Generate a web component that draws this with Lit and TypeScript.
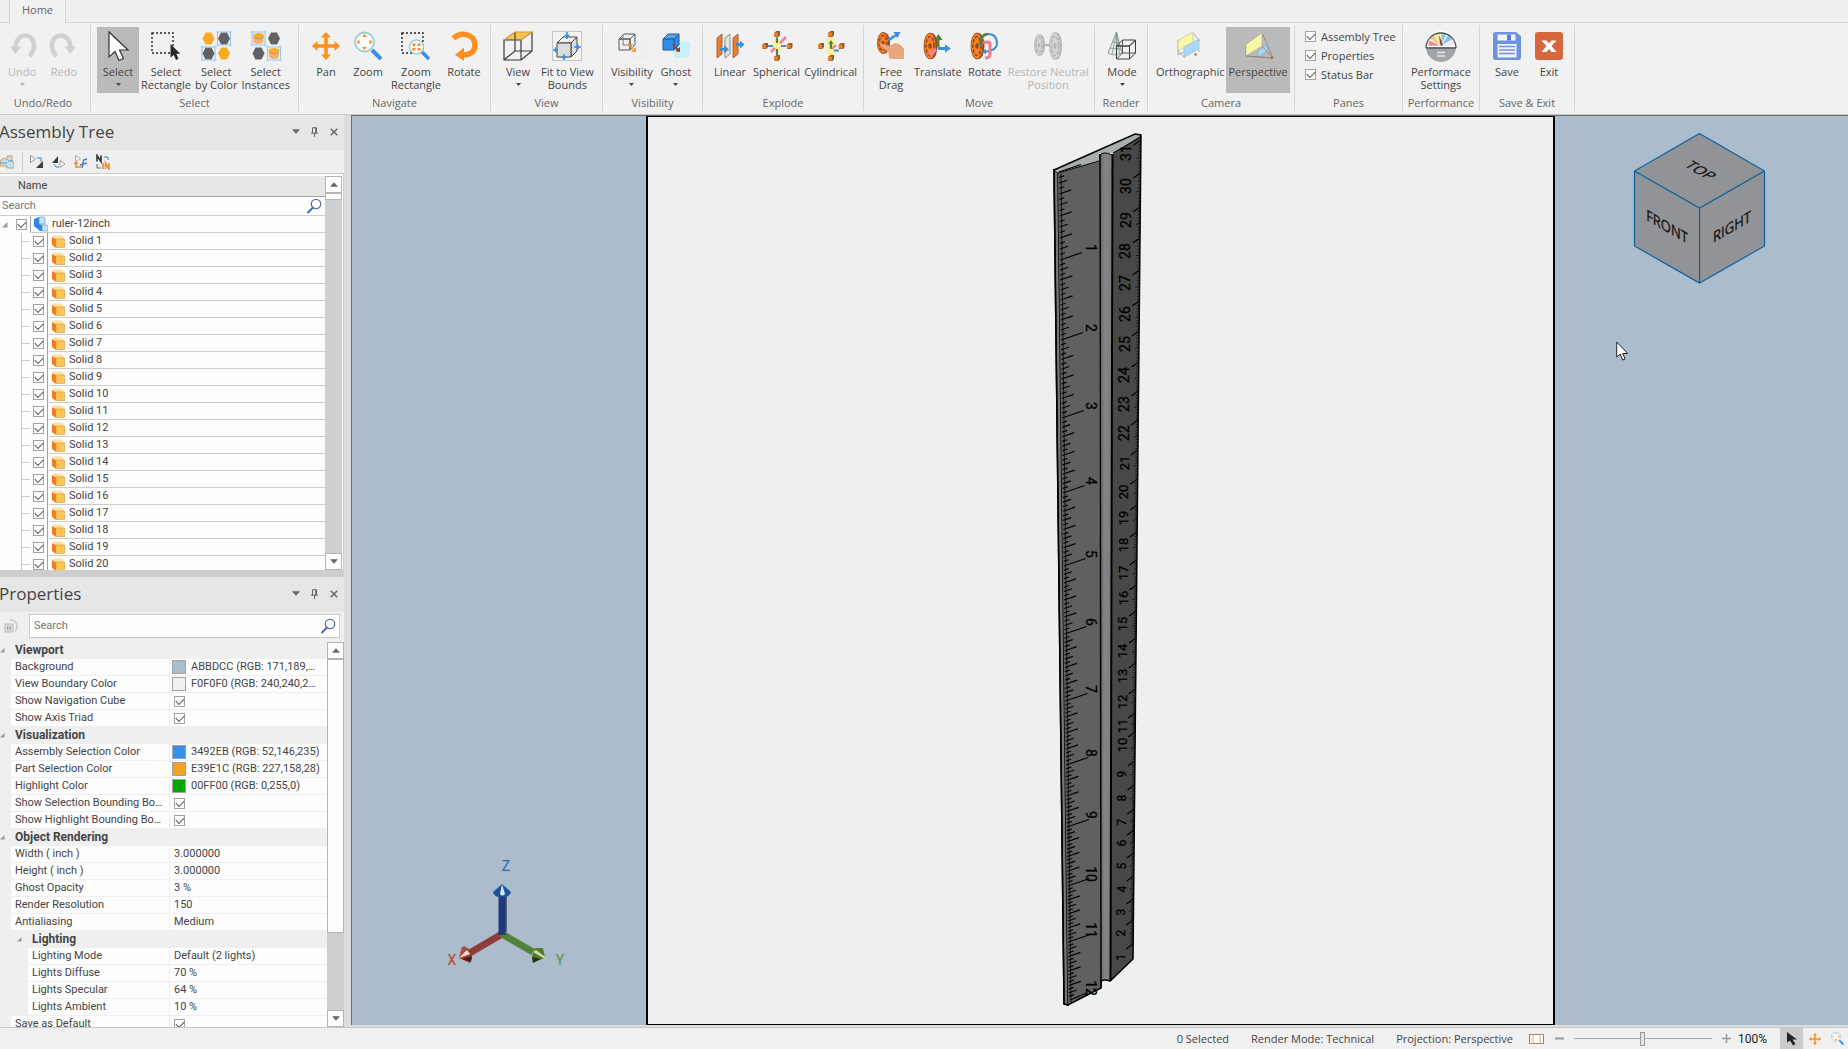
import { LitElement, html, svg, css, nothing } from "lit";
import { customElement, property } from "lit/decorators.js";

/* ---------- icon artwork, all on a 32 x 32 grid ---------- */

const hex = (x: number, y: number, fill: string) =>
  svg`<path d="M${x - 6} ${y}l3-6h6l3 6-3 6h-6z" fill=${fill}/>`;

const frame = (x: number, y: number) => svg`
  <rect x=${x - 6.5} y=${y - 6.5} width="13" height="13" fill="none" stroke="#8cc6ef"/>
  ${[-6.5, 6.5].map((dx) => [-6.5, 6.5].map((dy) => svg`<rect x=${x + dx - 1.2} y=${y + dy - 1.2} width="2.4" height="2.4" fill="#a9d5f5"/>`))}`;

const bucket = (x: number, y: number) => svg`
  <path d="M${x - 5} ${y - 3}v7q5 3 10 0v-7z" fill="#f3b176"/>
  <ellipse cx=${x} cy=${y - 3} rx="5.5" ry="2.5" fill="#f6ae2d"/>
  <path d="M${x - 5} ${y - 1}q5 3 10 0" fill="none" stroke="#d98a3f"/>`;

const wheel = (cx: number, cy: number, rx: number, ry: number, main: string, dark: string) => svg`
  <ellipse cx=${cx + 1.5} cy=${cy} rx=${rx} ry=${ry} fill=${dark}/>
  <ellipse cx=${cx} cy=${cy} rx=${rx} ry=${ry} fill=${main} stroke=${dark} stroke-width=".8"/>
  <ellipse cx=${cx} cy=${cy} rx=${rx * 0.68} ry=${ry * 0.72} fill="none" stroke=${dark} stroke-width="1.6" stroke-dasharray="3.4 1.6"/>
  <ellipse cx=${cx} cy=${cy} rx=${rx * 0.28} ry=${ry * 0.22} fill=${dark}/>`;

const cubelet = (x: number, y: number) => svg`
  <path d="M${x - 2.5} ${y - 1.5}l2-1.5h3.5v4l-1.5 2h-4z" fill="#8a5a33"/>
  <rect x=${x - 2.8} y=${y - 1.5} width="4" height="4" fill="#ef7d1f"/>`;

const fourArrows = svg`<path d="M16 2l5 5.5h-3.2v6.700h6.700v-3.200L30 16l-5.500 5v-3.200h-6.700v6.700H21L16 30l-5-5.500h3.200v-6.700H7.500V21L2 16l5.500-5v3.200h6.700V7.500H11z" fill="#ff9020"/>`;

const wireCube = (x: number, y: number, s: number, d: number, stroke = "#555", face = "none", top = "none") => svg`
  <g stroke=${stroke} fill="none" stroke-linejoin="round">
    <path d="M${x} ${y}l${d}-${d}h${s}l-${d} ${d}z" fill=${top}/>
    <path d="M${x + s} ${y}l${d}-${d}v${s}l-${d} ${d}z" fill=${face}/>
    <rect x=${x} y=${y} width=${s} height=${s} fill=${face}/>
  </g>`;

const curl = svg`<path d="M9.500 18C9.500 1.500 28 2 28 15.500c0 5-1.500 7.500-4.500 10.500" fill="none" stroke="#cfd1d1" stroke-width="4.500"/><path d="M4 16.500h11.500L9.500 24z" fill="#cfd1d1"/>`;

const pointer = svg`<path d="M7 2v25l6-5.500 4 9 4.500-2-4-8.500h8.500z" fill="#fff" stroke="#333" stroke-width="1.200"/>`;

const icons: Record<string, unknown> = {
  undo: curl,
  redo: svg`<g transform="translate(32 0) scale(-1 1)">${curl}</g>`,
  select: pointer,
  selectRect: svg`<rect x="2" y="3" width="21" height="20" fill="none" stroke="#222" stroke-width="1.400" stroke-dasharray="2 2"/><path d="M20.500 14v13.500l3.300-2.500 2.200 5 2.500-1.200-2.200-5h4z" fill="#262a28"/>`,
  selectColor: svg`${hex(8.500, 8.500, "#f8ab26")}${hex(24, 8.500, "#5f6163")}${hex(8.500, 23.500, "#5f6163")}${hex(24, 23.500, "#f8ab26")}${frame(24, 8.500)}${frame(8.500, 23.500)}`,
  selectInst: svg`${hex(24, 8.500, "#5f6163")}${hex(8.500, 23.500, "#5f6163")}${bucket(8.500, 8.500)}${bucket(24, 23.500)}${frame(8.500, 8.500)}${frame(24, 23.500)}`,
  pan: fourArrows,
  zoom: svg`<path d="M20 20l9 9" stroke="#3a8fe8" stroke-width="4"/><circle cx="12.500" cy="12" r="9.500" fill="#fff" stroke="#9ccfd0" stroke-width="1.800"/><path d="M12.500 4l2.500 3h-5zM12.500 20l2.500-3h-5zM4.500 12l3-2.500v5zM20.500 12l-3-2.500v5z" fill="#ff8b1e"/>`,
  zoomRect: svg`<rect x="2" y="3" width="21" height="20" fill="none" stroke="#222" stroke-width="1.400" stroke-dasharray="2 2"/><path d="M21 21l8 8" stroke="#3a8fe8" stroke-width="3.500"/><circle cx="16.500" cy="17" r="7" fill="#f6fbfb" stroke="#9ccfd0" stroke-width="1.500"/><path d="M12.500 13.500h3v2.500h-3zM17.500 13.500h3v2.500h-3zM12.500 18h3v2.500h-3zM17.500 18h3v2.500h-3z" fill="#ff8b1e"/>`,
  rotate: svg`<path d="M5.500 8.500C13 1 27 4 27 15c0 7-5 10-12 10" fill="none" stroke="#ff9020" stroke-width="5.500"/><path d="M7 25l9-7.500V31z" fill="#ff9020"/>`,
  view: svg`<path d="M2 10L13 2h17L19 10z" fill="#fcc44f"/><g fill="none" stroke="#3d3d3d" stroke-width="1.200"><path d="M2 10h17v20H2zM19 30l11-9V2M2 30l11-9h17M13 21V2"/><path d="M2 10L13 2h17L19 10" stroke="#c89a3c"/></g>`,
  fit: svg`<rect x="1.500" y="1.500" width="29" height="29" fill="#f3f3f3" stroke="#c5c5c5"/>${wireCube(6, 13, 14, 6, "#444", "#dcdcdc", "#f0f0f0")}<g stroke="#2f8de4" stroke-width="1.500"><path d="M16 2v7M13.500 5.500h5M23 17h7M27 14.500v5M2 20h5M4.500 17.500v5M13 24v6M10.500 27.500h5"/></g>`,
  visibility: svg`${wireCube(3, 9, 11, 5, "#555")}<path d="M7 5v10h11" fill="none" stroke="#777"/><g stroke="#e2e2e2" stroke-dasharray="1 1" fill="none"><rect x="16" y="16" width="11" height="11"/><path d="M16 16l4-4h11v11l-4 4"/></g><path d="M12 14l7 7" stroke="#ff9a2a" stroke-width="2" stroke-dasharray="3 1"/><path d="M20 22v-5l-5 5z" fill="#ff9a2a"/>`,
  ghost: svg`<path d="M14 16l4-4h12v12l-4 4H14z" fill="#c9effb"/>${wireCube(3, 9, 11, 5, "#2b5d94", "#2f8ce8", "#55a5ef")}<path d="M13 14l6 7" stroke="#8e4420" stroke-width="2" stroke-dasharray="3 1"/><path d="M20 22v-5l-5 4z" fill="#8e4420"/>`,
  linear: svg`<path d="M3 8l5-4v20l-5 4z" fill="#ef7d2b" stroke="#93502a" stroke-width=".8"/><path d="M11 8l5-4v20l-5 4z" fill="#e4e4e4" stroke="#777" stroke-width=".8"/><path d="M19 8l5-4v20l-5 4z" fill="#ef7d2b" stroke="#93502a" stroke-width=".8"/><path d="M6 18h4v-3l5 4.500-5 4v-3H6zM22 13h4v-2.500l4.500 4-4.500 4V16h-4z" fill="#3f8fd0"/>`,
  spherical: svg`<circle cx="16" cy="16" r="5.500" fill="#f5f29a"/>${cubelet(16, 4)}${cubelet(16, 28)}${cubelet(4, 16)}${cubelet(28.500, 16)}<path d="M16 13V7.500M16 19v6" stroke="#55803f" stroke-width="2.200"/><path d="M12 16H7M20 16h5" stroke="#3f8fd0" stroke-width="2.200"/><path d="M10 22l4-4M19 13l6-6" stroke="#ee7f8e" stroke-width="2.800"/>`,
  cylindrical: svg`<rect x="11.500" y="8" width="9" height="17" rx="3" fill="#f5f29a"/>${cubelet(16, 4)}${cubelet(16, 28)}${cubelet(6, 16)}${cubelet(26.500, 16)}<path d="M16 19v-7" stroke="#55803f" stroke-width="2.200"/><path d="M13.500 14l2.500-4 2.500 4z" fill="#55803f"/><path d="M17 19l4-4" stroke="#ee7f8e" stroke-width="2.400"/><path d="M19 20.500h5" stroke="#3f8fd0" stroke-width="2"/>`,
  freeDrag: svg`${wheel(8, 13, 5.500, 10.500, "#f58228", "#96441b")}<path d="M3 13q7 1 11 3l6-3q5 0 9 6v10H15q-2-4-1-6z" fill="#e6a680"/><path d="M12 9l8-4.500-1.500-2.500 7 0-3 6-1.500-1.500-7 5z" fill="#3a8ee6"/>`,
  translate: svg`${wheel(8, 16, 6, 13, "#f58228", "#96441b")}<path d="M16 17V9" stroke="#55803f" stroke-width="3"/><path d="M12.500 10L16.500 4l4 6z" fill="#55803f"/><path d="M16 18.500h8" stroke="#3f8fd0" stroke-width="3"/><path d="M23 14.500l6 4-6 4z" fill="#3f8fd0"/><path d="M14 19l-7 6" stroke="#ee7f8e" stroke-width="4"/>`,
  rotate3d: svg`${wheel(8, 16, 6, 13, "#f58228", "#96441b")}<path d="M11 16q1-12 8-12 9 0 9 10 0 6-12 8" fill="none" stroke="#3f8fd0" stroke-width="2"/><path d="M11 14q1-10 8-10" fill="none" stroke="#55803f" stroke-width="2.500"/><path d="M14 13q5-2 7 0v11q0 4-5 4" fill="none" stroke="#ee7f8e" stroke-width="3"/><path d="M12 22l5-3v5z" fill="#3f8fd0"/>`,
  restore: svg`<path d="M9 15h14" stroke="#b9b9b9" stroke-width="2.500"/>${wheel(7, 15, 4.500, 10.500, "#d4d4d4", "#b3b3b3")}${wheel(23, 16, 5.500, 13.500, "#d4d4d4", "#b3b3b3")}`,
  mode: svg`<path d="M10.500 2L2 23q6 4 14 0z" fill="#e3eaea" stroke="#7b8f8f" stroke-width=".8"/><path d="M10.500 2L6 24.500M10.500 2v23M10.500 2l3 22M6 12l7 1M4 18l11 1" stroke="#7b8f8f" stroke-width=".8" fill="none"/>${wireCube(10.500, 16, 13, 6, "#3c3c3c")}<path d="M16.500 10v13H30M16.500 23l-6 6" fill="none" stroke="#555"/>`,
  ortho: svg`<path d="M4 10v15l15-8M19 3l7 8M4 21l7 7M11 15L4 10M19 14l7 8" stroke="#999" stroke-width=".8" fill="none"/><path d="M4 10.500L19 2v11L4 21z" fill="#f7f8a4" stroke="#bbb" stroke-width=".6"/><path d="M10 17l15-8v10l-15 8z" fill="#a9d8f8" stroke="#98b8cc" stroke-width=".6"/><circle cx="21.500" cy="24.500" r="1.200" fill="#d05a22"/>`,
  persp: svg`<path d="M4 14v12l27 2L20 3" fill="none" stroke="#888" stroke-width=".9"/><path d="M4 14.500L20 3v13L4 26z" fill="#f7f8a4" stroke="#aaa" stroke-width=".6"/><path d="M16 21l9-6v6l-9 6z" fill="#a9d8f8" stroke="#8ab" stroke-width=".6"/><path d="M4 26l27 2M20 16l11 12" stroke="#888" stroke-width=".8"/><circle cx="30" cy="27.500" r="1.300" fill="#d05a22"/>`,
  perf: svg`<circle cx="16" cy="16" r="15" fill="#fff"/><g stroke="#fff" stroke-width=".5"><path d="M16 16H3q0-3 1.500-6z" fill="#ef8e8e"/><path d="M16 16L4.500 9Q6.500 6 9 4.500z" fill="#f4c585"/><path d="M16 16L10 4q3-1.500 6-1.500z" fill="#f5f08e"/><path d="M16 16V2.500q3.500 0 6 1.500z" fill="#8fcad0"/><path d="M16 16l7-11.500q3 2 4.500 5z" fill="#86c0f2"/><path d="M16 16l11.500-6Q29 13 29 16z" fill="#f9e3fa"/></g><path d="M1 17a15 15 0 0 0 30 0z" fill="#9fa6a5"/><path d="M1 18A15 15 0 1 1 31 18" fill="none" stroke="#4b5156" stroke-width="1.300"/><path d="M1 18h30" stroke="#555a66" stroke-width="1.500"/><path d="M14 5l3.500 9-2.500 1z" fill="#a33327"/><circle cx="16.500" cy="14.500" r="1.500" fill="#777"/><path d="M12 22.500h8M12 26h8" stroke="#e9ecec" stroke-width="1.500"/>`,
  save: svg`<path d="M4.500 2h20.500L30 6v21.500q0 2.500-2.500 2.500h-23Q2 30 2 27.500v-23Q2 2 4.500 2z" fill="#6f92df"/><path d="M6.500 4.500h18v6h-18z" fill="#f0f2f5"/><path d="M16 4.500h4v6h-4z" fill="#5d7fd0"/><path d="M6.500 14h19v13.500h-19z" fill="#f0f2f5"/><path d="M8 16.500h16M8 20h16M8 23.500h16" stroke="#6f92df" stroke-width="1.500"/>`,
  exit: svg`<rect x="2" y="2" width="28" height="28" rx="3" fill="#d8663d"/><path d="M8.500 10.500h5l2.500 3 2.500-3h5L18.500 16l5 6h-5L16 18.800 13.500 22h-5l5-6z" fill="#fff"/>`,
};

const chevron = svg`<path d="M0 0h8L4 4.500z" fill="currentColor"/>`;
const magnifier = html`<svg class="glass" width="16" height="16" viewBox="0 0 16 16" aria-hidden="true"><circle cx="10" cy="6" r="4.700" fill="#fff" stroke="#5c6f98" stroke-width="1.300"/><path d="M7 9.500L1.500 15" stroke="#4468b8" stroke-width="2"/></svg>`;

/* ---------- shared styles ---------- */

const base = css`
  * { box-sizing: border-box; }
  button, input { font: inherit; color: inherit; margin: 0; padding: 0; border: 0; background: none; }
  svg { display: block; flex: none; }
  input[type="checkbox"] {
    appearance: none; flex: none; width: 11px; height: 11px; border: 1px solid #a2a2a2; background: #fdfdfd;
    display: grid; place-items: center;
  }
  input[type="checkbox"]:checked::before {
    content: ""; width: 7px; height: 4px; border: solid #555; border-width: 0 0 1px 1px; outline: 0;
    transform: translateY(-1px) rotate(-45deg);
  }
  .glass { margin: 0 3px; }
`;

/* ---------- ribbon ---------- */

interface Tool { icon: string; label: string; second?: string; menu?: boolean; on?: boolean; off?: boolean }
interface Group { name: string; width: number; edge?: boolean; tools?: Tool[]; checks?: string[] }

const groups: Group[] = [
  { name: "Undo/Redo", width: 91, edge: true, tools: [{ icon: "undo", label: "Undo", menu: true, off: true }, { icon: "redo", label: "Redo", off: true }] },
  { name: "Select", width: 208, tools: [
    { icon: "select", label: "Select", menu: true, on: true },
    { icon: "selectRect", label: "Select", second: "Rectangle" },
    { icon: "selectColor", label: "Select", second: "by Color" },
    { icon: "selectInst", label: "Select", second: "Instances" }] },
  { name: "Navigate", width: 192, tools: [
    { icon: "pan", label: "Pan" }, { icon: "zoom", label: "Zoom" },
    { icon: "zoomRect", label: "Zoom", second: "Rectangle" }, { icon: "rotate", label: "Rotate" }] },
  { name: "View", width: 112, tools: [{ icon: "view", label: "View", menu: true }, { icon: "fit", label: "Fit to View", second: "Bounds" }] },
  { name: "Visibility", width: 100, tools: [{ icon: "visibility", label: "Visibility", menu: true }, { icon: "ghost", label: "Ghost", menu: true }] },
  { name: "Explode", width: 161, tools: [{ icon: "linear", label: "Linear" }, { icon: "spherical", label: "Spherical" }, { icon: "cylindrical", label: "Cylindrical" }] },
  { name: "Move", width: 231, tools: [
    { icon: "freeDrag", label: "Free", second: "Drag" }, { icon: "translate", label: "Translate" },
    { icon: "rotate3d", label: "Rotate" }, { icon: "restore", label: "Restore Neutral", second: "Position", off: true }] },
  { name: "Render", width: 53, tools: [{ icon: "mode", label: "Mode", menu: true }] },
  { name: "Camera", width: 147, tools: [{ icon: "ortho", label: "Orthographic" }, { icon: "persp", label: "Perspective", on: true }] },
  { name: "Panes", width: 108, checks: ["Assembly Tree", "Properties", "Status Bar"] },
  { name: "Performance", width: 77, tools: [{ icon: "perf", label: "Performace", second: "Settings" }] },
  { name: "Save & Exit", width: 95, tools: [{ icon: "save", label: "Save" }, { icon: "exit", label: "Exit" }] },
];

@customElement("app-ribbon")
class AppRibbon extends LitElement {
  static styles = [base, css`
    :host { display: block; background: #f1f1f1; color: #444; line-height: 13px; }
    .tabs { display: flex; height: 23px; background: #eef0ef; border-bottom: 1px solid #d4d4d4; padding-left: 9px; }
    .tab { width: 57px; height: 23px; border: solid #d4d4d4; border-width: 0 1px; background: #f1f1f1; color: #666; padding-bottom: 4px; }
    .groups { display: flex; height: 92px; padding-top: 2px; border-bottom: 1px solid #c8c8c8; overflow: hidden; }
    .group { flex: none; height: 86px; border-right: 1px solid #d4d4d4; display: flex; flex-direction: column; padding-top: 2px; }
    .name { text-align: center; color: #666; padding-top: 3px; white-space: nowrap; }
    .tools { display: flex; padding-left: 6px; height: 66px; }
    .edge { padding-right: 4px; }
    .edge .tools { padding-left: 1px; }
    .tool { flex: none; min-width: 42px; height: 66px; padding: 3px 2px 0; display: flex; flex-direction: column; align-items: center; white-space: nowrap; }
    .tool span { display: block; }
    .label { margin-top: 3px; }
    .on { background: #bababa; }
    .off { color: #b4b4b4; }
    .arrow { margin-top: 5px; }
    .checks { display: flex; flex-direction: column; height: 66px; padding: 0 0 0 10px; }
    .checks label { display: flex; align-items: center; gap: 5px; height: 19px; }
    @media (max-width: 1500px) { .groups { overflow-x: auto; } }
  `];
  render() {
    return html`
      <nav class="tabs"><button class="tab">Home</button></nav>
      <div class="groups">
        ${groups.map((g) => html`
          <section class="group ${g.edge ? "edge" : ""}" style="width:${g.width}px">
            ${g.tools ? html`<div class="tools">${g.tools.map((t) => html`
              <button class="tool ${t.on ? "on" : ""} ${t.off ? "off" : ""}" ?disabled=${!!t.off}>
                <svg width="32" height="32" viewBox="0 0 32 32" aria-hidden="true">${icons[t.icon]}</svg>
                <span class="label">${t.label}</span>
                ${t.second ? html`<span>${t.second}</span>` : nothing}
                ${t.menu ? html`<svg class="arrow" width="5" height="3" viewBox="0 0 8 4.500">${chevron}</svg>` : nothing}
              </button>`)}</div>`
            : html`<div class="checks">${g.checks!.map((c) => html`<label><input type="checkbox" checked>${c}</label>`)}</div>`}
            <div class="name">${g.name}</div>
          </section>`)}
      </div>`;
  }
}

/* ---------- pieces shared by the docked panes ---------- */

@customElement("pane-title")
class PaneTitle extends LitElement {
  @property() text = "";
  static styles = [base, css`
    :host { display: flex; align-items: center; height: 35px; flex: none; background: #e6e6e6; color: #444; padding: 0 1px 2px 0; overflow: hidden; }
    h2 { flex: 1; margin: 0 0 0 -1px; font: 400 17px/24px "Open Sans", "Noto Sans", sans-serif; }
    button { width: 19px; height: 19px; display: grid; place-items: center; color: #666; }
  `];
  render() {
    return html`<h2>${this.text}</h2>
      <button aria-label="Options"><svg width="8" height="5" viewBox="0 0 8 4.500">${chevron}</svg></button>
      <button aria-label="Pin"><svg width="9" height="10" viewBox="0 0 9 10"><path d="M2.500 6V.700h4V6M1 6.200h7M4.500 6v4M5.700 1v5" fill="none" stroke="#666"/></svg></button>
      <button aria-label="Close"><svg width="8" height="8" viewBox="0 0 8 8"><path d="M.700.700l6.600 6.600M7.300.700L.700 7.300" stroke="#666" stroke-width="1.500"/></svg></button>`;
  }
}

@customElement("scroll-rail")
class ScrollRail extends LitElement {
  @property({ type: Number }) thumb = 10;
  static styles = [base, css`
    :host { display: flex; flex-direction: column; flex: none; width: 17px; background: #cdd0cf; }
    button { flex: none; height: 17px; border: 1px solid #b4b4b4; background: #fdfdfd; display: grid; place-items: center; color: #666; }
    .track { flex: 1; min-height: 0; }
    .thumb { background: #fdfdfd; border: 1px solid #b4b4b4; }
    .up { transform: rotate(180deg); }
  `];
  render() {
    const tri = (c: string) => html`<svg class=${c} width="8" height="5" viewBox="0 0 8 4.500">${chevron}</svg>`;
    return html`<button aria-label="Scroll up">${tri("up")}</button>
      <div class="track"><div class="thumb" style="height:${this.thumb}%"></div></div>
      <button aria-label="Scroll down">${tri("")}</button>`;
  }
}

/* ---------- assembly tree ---------- */

@customElement("assembly-tree")
class AssemblyTree extends LitElement {
  static styles = [base, css`
    :host { display: flex; flex-direction: column; min-height: 0; color: #444; overflow: hidden; }
    .bar { display: flex; align-items: center; flex: none; height: 23px; background: #efefef; }
    .bar button { width: 22px; display: grid; place-items: center; }
    .bar .first { width: 23px; height: 20px; border-right: 1px solid #d0d0d0; padding-right: 10px; margin-right: 3px; }
    .box { display: flex; flex: 1; min-height: 0; padding: 2px 1px 0 0; background: #fdfdfd; border: solid #ccc; border-width: 1px 1px 0 0; }
    .list { flex: 1; min-width: 0; overflow: hidden; }
    .head { height: 21px; padding-left: 18px; line-height: 20px; background: #e6e6e6; border-bottom: 1px solid #a2a2a2; }
    .find { display: flex; align-items: center; height: 19px; border-bottom: 1px solid #ccc; padding-left: 2px; }
    .find input { flex: 1; min-width: 0; outline: 0; }
    .find input::placeholder { color: #777; opacity: 1; }
    ul { list-style: none; margin: 0; padding: 0; }
    .row { display: flex; height: 17px; align-items: center; }
    .root { gap: 3px; padding-left: 2px; }
    .root label, .kid label { display: flex; align-items: center; flex: 1; height: 17px; border-left: 1px solid #a2a2a2; }
    .item { display: flex; align-items: center; flex: 1; height: 17px; margin-left: 1px; border-bottom: 1px solid #ccc; gap: 4px; }
    .root .item { padding-left: 2px; }
    .kid .item { padding-left: 3px; }
    .kid { margin-left: 21px; border-left: 1px solid #ccc; gap: 3px; }
    .kid::before { content: ""; width: 8px; height: 1px; background: #ccc; }
    .twist { width: 6px; margin-right: 5px; }
  `];
  render() {
    const kids = Array.from({ length: 20 }, (_, i) => `Solid ${i + 1}`);
    return html`
      <pane-title text="Assembly Tree"></pane-title>
      <div class="bar">
        <button class="first" aria-label="Isolate"><svg width="14" height="14" viewBox="0 0 14 14"><path d="M0 6l4-3 3 2V1h5v5l2 2v5H7v-2H0z" fill="#bfe0f2" stroke="#d79b56"/><path d="M0 8h7M8 6h5" stroke="#5d8fb8"/></svg></button>
        <button aria-label="Expand selected"><svg width="16" height="16" viewBox="0 0 16 16"><path d="M1.500 1.500v7l5-3.500z" fill="#fff" stroke="#999"/><path d="M8 4h4v4" fill="none" stroke="#4a79c4"/><path d="M14 7v7H7z" fill="#3d3d3d"/></svg></button>
        <button aria-label="Collapse selected"><svg width="16" height="16" viewBox="0 0 16 16"><path d="M7 2v7H1z" fill="#3d3d3d"/><path d="M9 6.500v7l5-3.500z" fill="#fff" stroke="#999"/><path d="M3 10l2 3h3" fill="none" stroke="#4a79c4"/></svg></button>
        <button aria-label="Find selected"><svg width="16" height="16" viewBox="0 0 16 16"><path d="M2.500 1.500v6l5-3z" fill="#fff" stroke="#aaa"/><path d="M3 9.500v3.500h5" fill="none" stroke="#f28a20" stroke-width="1.500"/><path d="M3 7l2.500 3h-5z" fill="#f28a20"/><path d="M14 5l-3.500 1-.5 4-3 1M14 9l-4 1-1 4" fill="none" stroke="#4a79c4" stroke-width="1.400"/></svg></button>
        <button aria-label="Rename from part"><svg width="16" height="16" viewBox="0 0 16 16"><path d="M2 7.500v-6l4 6v-6" fill="none" stroke="#333" stroke-width="1.600"/><path d="M13 6V3H9M2 10v4h4" fill="none" stroke="#4a79c4"/><path d="M8 15V9M10.500 15V9l3.500 6V9" fill="none" stroke="#f28a20" stroke-width="1.600"/></svg></button>
      </div>
      <div class="box">
        <div class="list">
          <div class="head">Name</div>
          <div class="find"><input type="text" placeholder="Search" aria-label="Search tree">${magnifier}</div>
          <ul>
            <li>
              <div class="row root">
                <svg class="twist" width="6" height="6" viewBox="0 0 6 6"><path d="M5.500 0v5.500H0z" fill="#999"/></svg>
                <input type="checkbox" id="root" checked>
                <label for="root"><span class="item"><svg width="14" height="16" viewBox="0 0 14 16"><path d="M0 3l5-2v7l4 1v6H6L0 10z" fill="#2f86e0"/><path d="M5 1h5l1 1v6H5z" fill="#bfe3f6" stroke="#5f8fb5" stroke-width=".6"/><path d="M8 9h5l1 1v5H8z" fill="#bfe3f6" stroke="#5f8fb5" stroke-width=".6"/></svg>ruler-12inch</span></label>
              </div>
              <ul>${kids.map((k, i) => html`
                <li class="row kid"><input type="checkbox" id="s${i}" checked>
                  <label for="s${i}"><span class="item"><svg width="13" height="13" viewBox="0 0 13 13"><path d="M0 2l4 2v9l-4-3z" fill="#ef7d1f"/><path d="M0 2l2-1.500h8L12.500 4H4z" fill="#fbe0a0"/><path d="M4 4h8.500v8.500H4z" fill="#fdc654" stroke="#d9953a" stroke-width=".6"/></svg>${k}</span></label>
                </li>`)}
              </ul>
            </li>
          </ul>
        </div>
        <scroll-rail thumb="2"></scroll-rail>
      </div>`;
  }
}

/* ---------- property grid ---------- */

type Prop = { section?: string; name?: string; value?: string; color?: string; check?: boolean; deep?: boolean };

const props: Prop[] = [
  { section: "Viewport" },
  { name: "Background", value: "ABBDCC (RGB: 171,189,204)", color: "#abbdcc" },
  { name: "View Boundary Color", value: "F0F0F0 (RGB: 240,240,240)", color: "#f0f0f0" },
  { name: "Show Navigation Cube", check: true },
  { name: "Show Axis Triad", check: true },
  { section: "Visualization" },
  { name: "Assembly Selection Color", value: "3492EB (RGB: 52,146,235)", color: "#3492eb" },
  { name: "Part Selection Color", value: "E39E1C (RGB: 227,158,28)", color: "#f3a225" },
  { name: "Highlight Color", value: "00FF00 (RGB: 0,255,0)", color: "#00a800" },
  { name: "Show Selection Bounding Boxes", check: true },
  { name: "Show Highlight Bounding Boxes", check: true },
  { section: "Object Rendering" },
  { name: "Width ( inch )", value: "3.000000" },
  { name: "Height ( inch )", value: "3.000000" },
  { name: "Ghost Opacity", value: "3 %" },
  { name: "Render Resolution", value: "150" },
  { name: "Antialiasing", value: "Medium" },
  { section: "Lighting", deep: true },
  { name: "Lighting Mode", value: "Default (2 lights)", deep: true },
  { name: "Lights Diffuse", value: "70 %", deep: true },
  { name: "Lights Specular", value: "64 %", deep: true },
  { name: "Lights Ambient", value: "10 %", deep: true },
  { name: "Save as Default", check: true },
];

@customElement("property-grid")
class PropertyGrid extends LitElement {
  static styles = [base, css`
    :host { display: flex; flex-direction: column; min-height: 0; color: #444; background: #efefef; overflow: hidden; }
    .bar { display: flex; align-items: center; flex: none; height: 30px; padding: 0 4px 2px; gap: 11px; }
    .find { flex: 1; display: flex; align-items: center; height: 24px; background: #fdfdfd; border: 1px solid #ccc; padding-left: 4px; }
    .find input { flex: 1; min-width: 0; outline: 0; }
    .find input::placeholder { color: #777; opacity: 1; }
    .body { flex: 1; min-height: 0; display: flex; }
    .scroll { flex: 1; min-width: 0; overflow: hidden; }
    table, tbody { display: block; }
    tr { display: grid; grid-template-columns: 11px 158px 1fr; height: 17px; }
    .deep { grid-template-columns: 28px 141px 1fr; }
    th, td { padding: 0; font-weight: 400; text-align: left; min-width: 0; }
    .twist { display: flex; justify-content: flex-end; align-items: center; padding-right: 6px; }
    .section th { grid-column: 2 / 4; font-weight: 700; font-size: 12px; padding-left: 4px; line-height: 16px; }
    .name, .value { background: #fdfdfd; border-bottom: 1px solid #efefef; line-height: 16px; white-space: nowrap; overflow: hidden; text-overflow: ellipsis; }
    .name { padding: 0 4px; }
    .value { border-left: 1px solid #efefef; display: flex; align-items: center; gap: 5px; padding: 0 6px 0 4px; }
    .value span { overflow: hidden; text-overflow: ellipsis; }
    .value.tinted { padding-left: 2px; }
    .swatch { flex: none; width: 14px; height: 14px; border: 1px solid #a2a2a2; }
  `];
  render() {
    return html`
      <pane-title text="Properties"></pane-title>
      <div class="bar">
        <svg width="14" height="14" viewBox="0 0 14 14" aria-hidden="true"><path d="M1 5h8v8H1z" fill="#ddd" stroke="#bbb"/><path d="M3.500 11V7l3 4V7" fill="none" stroke="#aaa"/><path d="M6 1q7 0 7 7 0 3-2 4" fill="none" stroke="#ccc" stroke-width="1.500"/></svg>
        <div class="find"><input type="text" placeholder="Search" aria-label="Search properties">${magnifier}</div>
      </div>
      <div class="body">
        <div class="scroll"><table><tbody>
          ${props.map((p, i) => p.section
            ? html`<tr class="section ${p.deep ? "deep" : ""}"><td class="twist"><svg width="5" height="5" viewBox="0 0 6 6"><path d="M5.500 0v5.500H0z" fill="#999"/></svg></td><th scope="rowgroup">${p.section}</th></tr>`
            : html`<tr class=${p.deep ? "deep" : ""}><td></td><th class="name" scope="row" id="n${i}">${p.name}</th>
              <td class="value ${p.color ? "tinted" : ""}">
                ${p.color ? html`<i class="swatch" style="background:${p.color}"></i>` : nothing}
                ${p.check ? html`<input type="checkbox" aria-labelledby="n${i}" checked>` : html`<span>${p.value}</span>`}
              </td></tr>`)}
        </tbody></table></div>
        <scroll-rail thumb="78"></scroll-rail>
      </div>`;
  }
}

/* ---------- 3D view ---------- */

const inchY = [172, 260, 340, 418, 493, 566, 634, 701, 765, 827, 886, 942, 1000];
const cmY = [957, 933, 912, 889, 866, 843, 822, 798, 774, 745, 726, 702, 676, 651, 624, 598, 573, 545, 518, 492, 463, 433, 404, 375, 344, 314, 283, 251, 220, 186, 153];

const leftEdge = (y: number) => 1059 + ((y - 172) / 830) * 10;
const rightEdge = (y: number) => 1141 - ((y - 135) / 824) * 8;

function inchTicks() {
  const out = [];
  for (let n = 0; n < 12; n++) {
    for (let k = 0; k < 16; k++) {
      const y = inchY[n] + ((inchY[n + 1] - inchY[n]) * k) / 16;
      const len = k === 0 ? 22 : k % 4 === 0 ? 12 : k % 2 === 0 ? 8 : 5;
      const x = leftEdge(y);
      out.push(svg`<path d="M${x} ${y}l${len}-${len * 0.34}"/>`);
    }
  }
  out.push(svg`<path d="M1070 1000l17-7"/>`);
  return out;
}

const cmTicks = () => cmY.map((y, i) => {
  const x = rightEdge(y);
  const step = i ? (cmY[i - 1] - y) / 10 : 0;
  const fine = [1, 2, 3, 4, 5, 6, 7, 8, 9].map((k) => svg`<path d="M${x - (k === 5 ? 4 : 2.500)} ${y - 11 + k * step}l${k === 5 ? 4 : 2.500}-1.500" stroke-width=".8"/>`);
  return svg`<path d="M${x - 7} ${y - 8}l7-5"/>${i ? fine : nothing}`;
});

@customElement("model-view")
class ModelView extends LitElement {
  static styles = [base, css`
    :host { display: flex; justify-content: center; position: relative; min-width: 0; background: #abbdcc; border-left: 1px solid #6d6d6d; border-top: 1px solid #6d6d6d; overflow: hidden; }
    .sheet { height: 100%; aspect-ratio: 1; background: #eef0ef; border: solid #000; border-width: 1px 2px; display: flex; justify-content: center; align-items: center; }
    .cube, .triad, .mouse { position: absolute; }
    .cube { right: 82px; top: 15px; }
    .triad { left: 90px; bottom: 47px; }
    .mouse { right: 219px; top: 225px; }
    text { font-family: "Open Sans", "Noto Sans", sans-serif; }
    .thin { font-family: Roboto, "Liberation Sans", sans-serif; }
  `];
  render() {
    return html`
      <div class="sheet">
        <svg width="140" height="906" viewBox="1030 118 140 906" role="img" aria-label="ruler-12inch">
          <defs><linearGradient id="ridge"><stop offset="0" stop-color="#606060"/><stop offset=".45" stop-color="#858585"/><stop offset="1" stop-color="#7c7c7c"/></linearGradient></defs>
          <path d="M1054 170L1058 173 1068 1005 1064 1004z" fill="#777" stroke="#000" stroke-width="1.500"/>
          <path d="M1058 173L1099 161 1101 988 1068 1005z" fill="#606060"/>
          <path d="M1113 153L1141 135 1133 959 1110 981z" fill="#484848"/>
          <path d="M1054 170L1135 134 1141 135 1113 153 1108 153 1099 153V161L1058 173z" fill="#a9aeab"/>
          <path d="M1099 155q6-4 13 0L1110 981q-5-2-9 0z" fill="url(#ridge)"/>
          <g stroke="#000" fill="none">
            <path d="M1100 154L1101 988" stroke-width="1.500"/>
            <path d="M1112.500 154L1110.500 981" stroke-width="2"/>
            <path d="M1099 155q6-4 13 0"/>
            <path d="M1058 173L1099 161M1113 153L1141 137"/>
            <path d="M1054 170L1135 134l6 1L1133 959l-23 22q-5-2-9 0v7l-33 17-4-1z" stroke-width="1.500"/>
            <path d="M1061 174L1071 1003" stroke-width=".8"/>
          </g>
          <g stroke="#000" stroke-width="1.200">${inchTicks()}${cmTicks()}</g>
          <g font-size="14" text-anchor="middle" stroke="#000" stroke-width=".3">
            ${inchY.slice(1).map((y, i) => svg`<text class="thin" transform="translate(1086 ${y - 12}) rotate(90)">${i + 1}</text>`)}
          </g>
          <g text-anchor="middle" stroke="#000" stroke-width=".3">
            ${cmY.map((y, i) => svg`<text class="thin" font-size=${i > 20 ? 14 : i > 8 ? 13 : 12} transform="translate(${1131 - ((y - 153) / 804) * 6} ${y}) rotate(-90)">${i + 1}</text>`)}
          </g>
        </svg>
      </div>
      <svg class="cube" width="134" height="154" viewBox="1632 131 134 154" role="img" aria-label="Navigation cube">
        <path d="M1699.500 133.500L1764.500 171V246L1699.500 283 1634.500 246V171z" fill="#929396"/>
        <path d="M1699.500 133.500L1764.500 171V246L1699.500 283 1634.500 246V171zM1634.500 171L1699.500 208 1764.500 171M1699.500 208V283" fill="none" stroke="#0a609f" stroke-width="1.200"/>
        <g font-size="15" text-anchor="middle" fill="#111" stroke="#111" stroke-width=".3">
          <text transform="matrix(.866 .5 0 1 1667 232)">FRONT</text>
          <text transform="matrix(.866 -.5 0 1 1732 232)">RIGHT</text>
          <text transform="matrix(.866 .5 -.866 .5 1696 173)">TOP</text>
        </g>
      </svg>
      <svg class="triad" width="124" height="120" viewBox="442 858 124 120" role="img" aria-label="Axis triad">
        <path d="M502 934L468 954" stroke="#8f3c3d" stroke-width="7"/>
        <path d="M502 934L533 952" stroke="#55823a" stroke-width="7"/>
        <path d="M502 935V896" stroke="#20377c" stroke-width="7"/><path d="M506 932V896" stroke="#0b1020"/>
        <path d="M502 884l9 8q-1 4-5 5h-8q-4-1-5-5z" fill="#1f529c"/><path d="M502 884l3 10q-3 3-5 0z" fill="#d3ecff"/>
        <path d="M459 958l3-11 6 1 4 10-2 5z" fill="#9c3b38"/><path d="M459 958l3-11 3-1 4 8z" fill="#b44b43"/><path d="M459 958l8-8 3 4z" fill="#ffe0d0"/><path d="M462 959l10-3-1 6z" fill="#431d1b"/>
        <path d="M545 958l-2-10-8 0-3 8 1 6z" fill="#4b7a2b"/><path d="M541 959l-9-2 1 6z" fill="#26311a"/><path d="M545 958l-10-6 1-1z" fill="#f4e8c0" stroke="#d9d5a0" stroke-width="2"/>
        <g font-size="14" text-anchor="middle"><text class="thin" x="506" y="871" fill="#2c66a8">Z</text><text class="thin" x="452" y="965" fill="#b5402c">X</text><text class="thin" x="560" y="965" fill="#5c8a44">Y</text></g>
      </svg>
      <svg class="mouse" width="13" height="20" viewBox="0 0 13 20" aria-hidden="true"><path d="M.700 1v15l3.500-3 2.500 6 2.500-1-2.500-5.500h5z" fill="#fff" stroke="#222"/></svg>`;
  }
}

/* ---------- status bar ---------- */

@customElement("status-bar")
class StatusBar extends LitElement {
  static styles = [base, css`
    :host { display: flex; justify-content: flex-end; align-items: center; height: 22px; background: #f0f0f0; border-top: 1px solid #c8c8c8; color: #444; overflow: hidden; white-space: nowrap; }
    .msg { margin-right: 22px; }
    .last { margin-right: 16px; }
    .fit { margin-right: 11px; }
    button { display: grid; place-items: center; height: 21px; flex: none; }
    input[type="range"] { appearance: none; width: 138px; height: 13px; margin: 0 10px; background: linear-gradient(#a8a8a8, #a8a8a8) center / 100% 1px no-repeat; }
    input[type="range"]::-webkit-slider-thumb { appearance: none; width: 5px; height: 14px; border: 1px solid #999; background: #e4e4e4; }
    .pct { margin: 0 13px 0 7px; font-family: Roboto, sans-serif; color: #222; font-size: 12px; }
    .mode { width: 23px; }
    .modes { display: flex; margin-right: -1px; }
    .on { background: #cbcbcb; }
  `];
  render() {
    return html`
      <span class="msg">0 Selected</span><span class="msg">Render Mode: Technical</span><span class="msg last">Projection: Perspective</span>
      <button class="fit" aria-label="Fit"><svg width="15" height="10" viewBox="0 0 15 10"><path d="M.500.500h14v9H.500z" fill="#fff" stroke="#8f8078"/><path d="M4 0v10M11 0v10" stroke="#e5a36c"/></svg></button>
      <button aria-label="Zoom out"><svg width="9" height="9" viewBox="0 0 9 9"><path d="M0 4.500h9" stroke="#999" stroke-width="2"/></svg></button>
      <input type="range" aria-label="Zoom" min="0" max="100" value="50">
      <button aria-label="Zoom in"><svg width="9" height="9" viewBox="0 0 9 9"><path d="M0 4.500h9M4.500 0v9" stroke="#999" stroke-width="1.500"/></svg></button>
      <span class="pct">100%</span>
      <div class="modes">
        <button class="mode on" aria-label="Select"><svg width="12" height="14" viewBox="0 0 12 14"><path d="M1 0v10.500L4 8.500l3 5 2.500-1.500-3-4.500H11z" fill="#222"/></svg></button>
        <button class="mode" aria-label="Pan"><svg width="14" height="14" viewBox="0 0 32 32">${fourArrows}</svg></button>
        <button class="mode" aria-label="Zoom tool"><svg width="15" height="15" viewBox="0 0 32 32">${icons.zoom}</svg></button>
      </div>`;
  }
}

@customElement("app-root")
class AppRoot extends LitElement {
  static styles = [base, css`
    :host { display: grid; grid-template-rows: auto 1fr auto; height: 100vh; background: #f0f0f0; font: 11px/14px "Open Sans", "Noto Sans", sans-serif; overflow: hidden; }
    .main { display: grid; grid-template-columns: 344px 1fr; column-gap: 7px; min-height: 0; background: #dcdcdc; }
    .dock { display: flex; flex-direction: column; min-height: 0; font: 11px/14px Roboto, "Liberation Sans", sans-serif; }
    assembly-tree { flex: 455 1 0; }
    property-grid { flex: 450 1 0; }
    .split { flex: none; height: 7px; background: #cdcdcd; }
    model-view { margin-bottom: 2px; }
  `];
  render() {
    return html`
      <app-ribbon></app-ribbon>
      <main class="main">
        <div class="dock"><assembly-tree></assembly-tree><div class="split"></div><property-grid></property-grid></div>
        <model-view></model-view>
      </main>
      <status-bar></status-bar>`;
  }
}
